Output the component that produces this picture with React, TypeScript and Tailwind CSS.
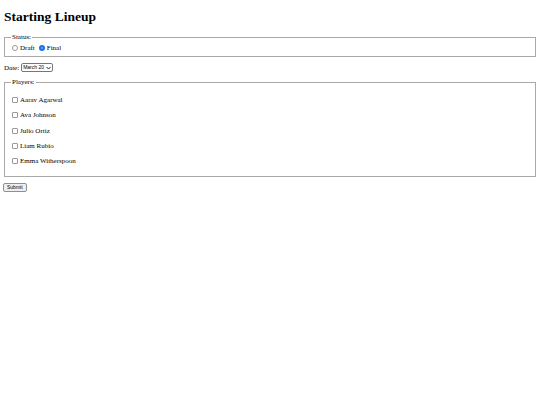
import React from "react";

const players = ["Aarav Agarwal", "Ava Johnson", "Julio Ortiz", "Liam Rubio", "Emma Witherspoon"];

const App: React.FC = () => {
  return (
    <div className="min-h-[405px] bg-white px-[4px] font-['Liberation_Serif',serif] text-[7px] leading-[8px] text-black">
      {/* Heading */}
      <h1 className="pt-[9px] text-[13.5px] leading-[16px] font-bold">Starting Lineup</h1>

      {/* Status */}
      <fieldset className="mt-[8px] border border-[#a9a9a9] px-[6px] pt-[3px] pb-[4px]">
        <legend className="px-[1px]">Status:</legend>
        <div className="flex items-center">
          <span className="ml-[1px] h-[6px] w-[6px] rounded-full border border-[#9a9a9a]" />
          <span className="ml-[2px]">Draft</span>
          <span className="ml-[4px] flex h-[6px] w-[6px] items-center justify-center rounded-full bg-[#1a73e8]">
            <span className="h-[2px] w-[2px] rounded-full bg-white/40" />
          </span>
          <span className="ml-[2px]">Final</span>
        </div>
      </fieldset>

      {/* Date */}
      <div className="mt-[6px] flex items-center">
        <span>Date:</span>
        <span className="ml-[2px] flex h-[9px] items-center gap-[2px] rounded-[2px] border border-[#767676] px-[1px] font-['Liberation_Sans',sans-serif] text-[5px] leading-[7px]">
          March 20
          <svg width="5" height="4" viewBox="0 0 10 8" fill="none" stroke="#222" strokeWidth="2">
            <path d="M1 2l4 4 4-4" />
          </svg>
        </span>
      </div>

      {/* Players */}
      <fieldset className="mt-[6px] border border-[#a9a9a9] px-[6px] pb-[11px]">
        <legend className="px-[1px]">Players:</legend>
        <div className="flex flex-col gap-[7.25px] pt-[10px]">
          {players.map((p) => (
            <label key={p} className="flex items-center">
              <span className="ml-[1px] h-[6px] w-[6px] rounded-[1px] border border-[#9a9a9a]" />
              <span className="ml-[2px]">{p}</span>
            </label>
          ))}
        </div>
      </fieldset>

      {/* Submit */}
      <button className="-ml-[1px] mt-[6px] flex h-[9px] items-center rounded-[2px] border border-[#8f8f8f] bg-[#efefef] px-[3px] font-['Liberation_Sans',sans-serif] text-[5px] leading-[7px]">
        Submit
      </button>
    </div>
  );
};

export default App;
